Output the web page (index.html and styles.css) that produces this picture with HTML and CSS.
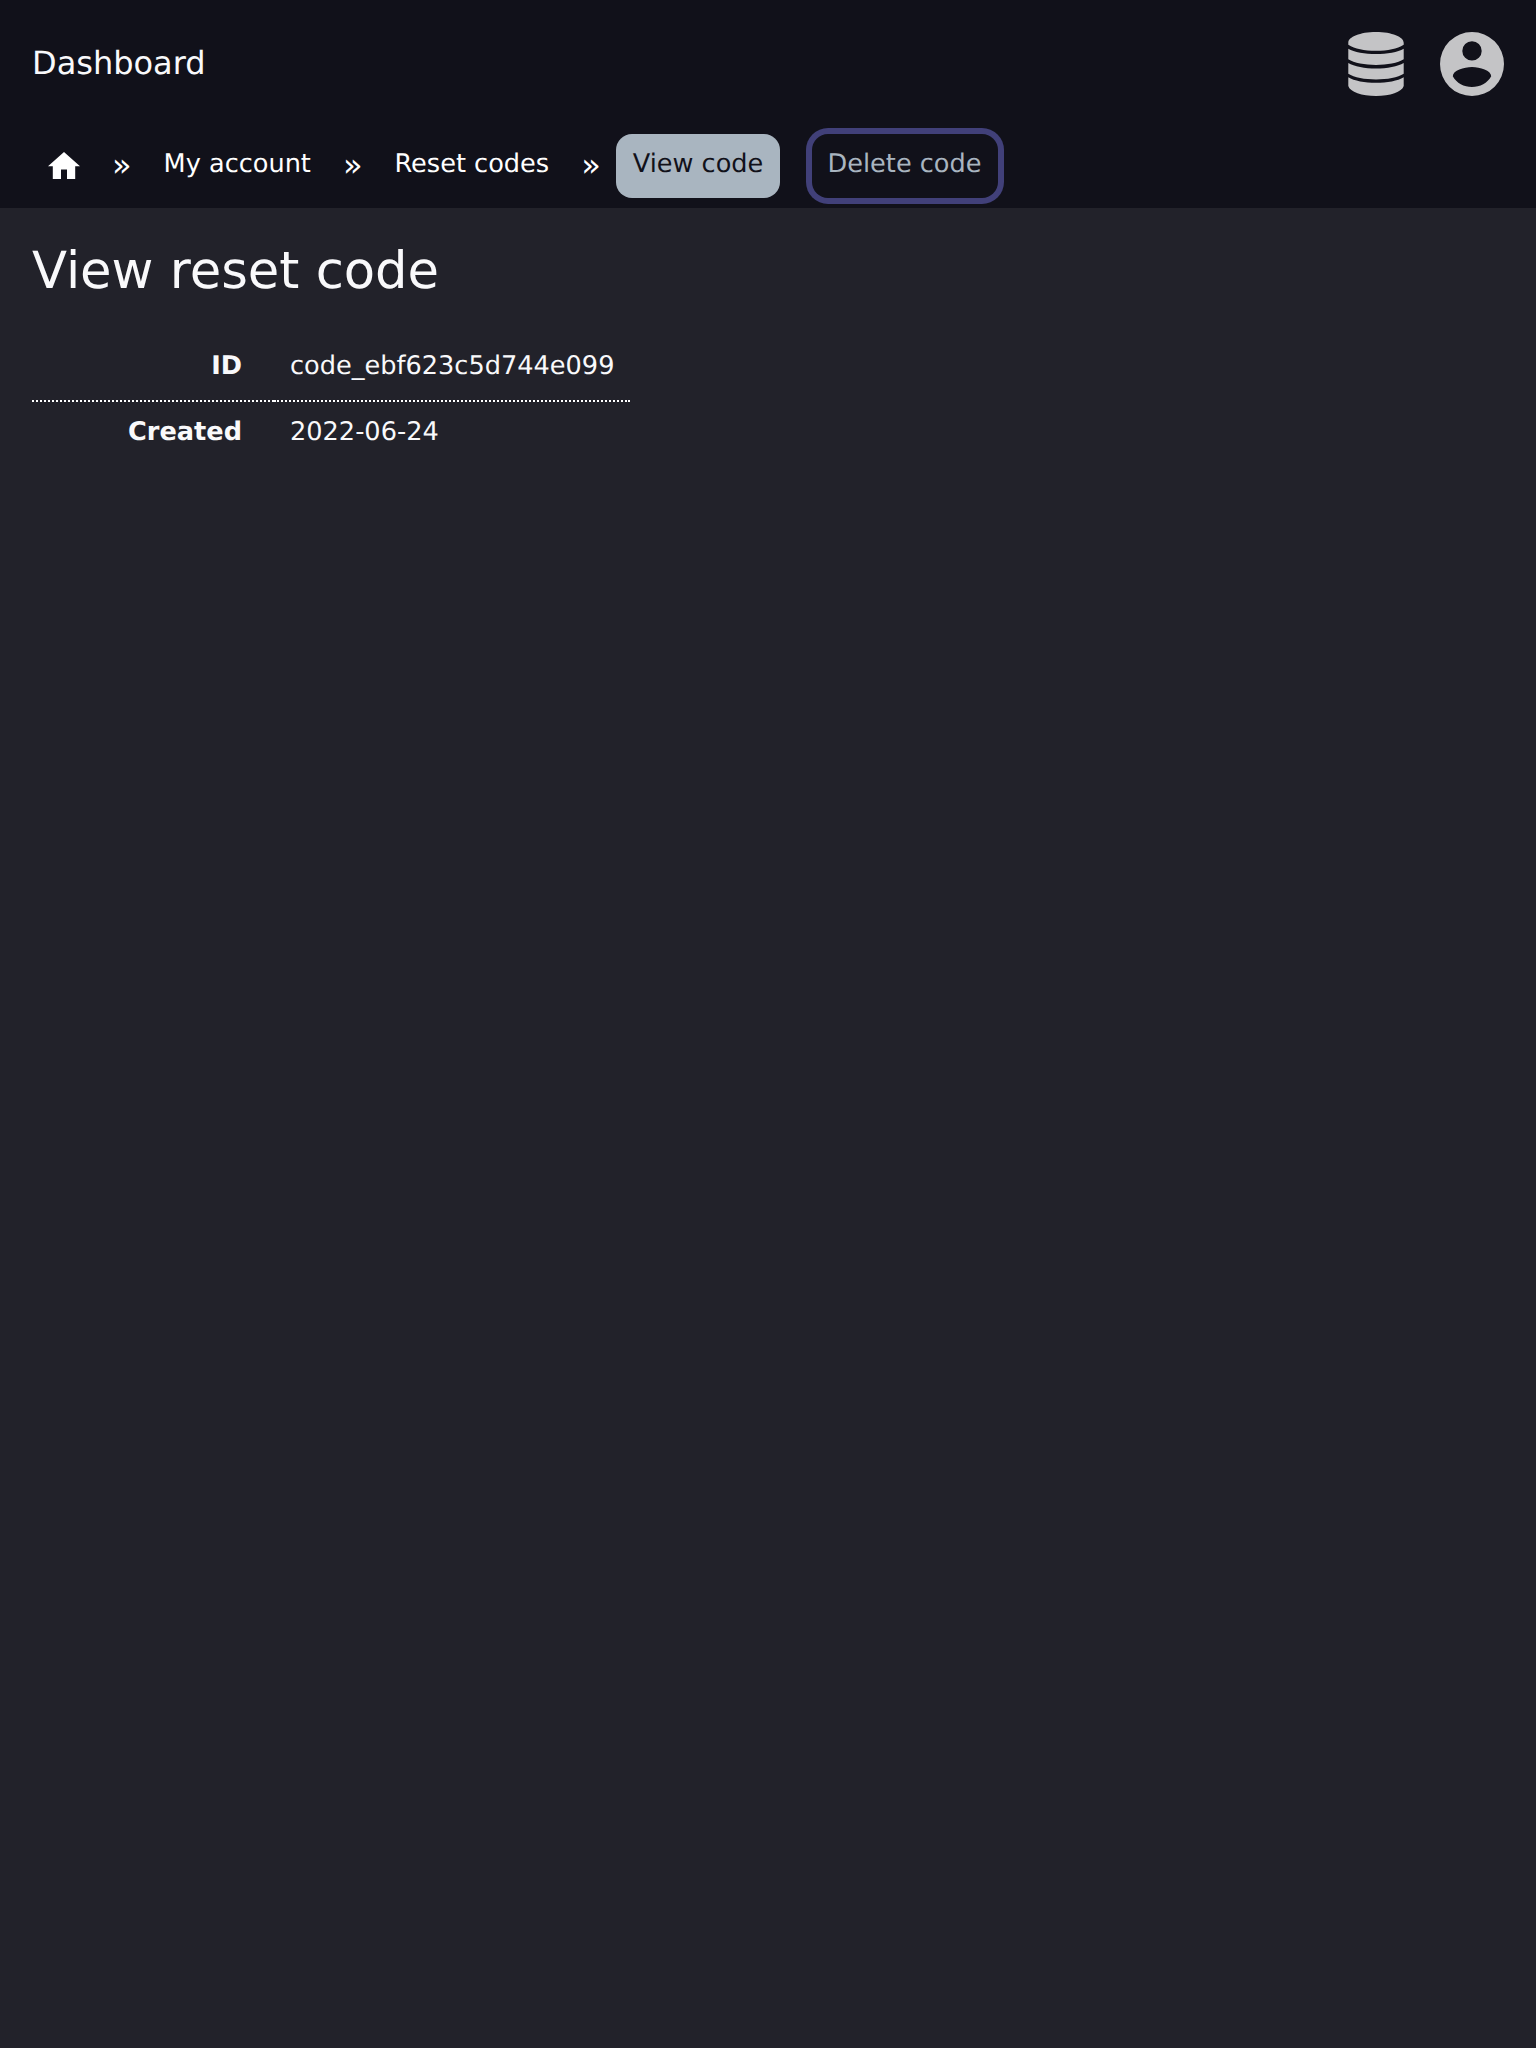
FILE: index.html
```html
<!DOCTYPE html>
<html lang="en">
<head>
<meta charset="utf-8">
<title>View reset code</title>
<link rel="stylesheet" href="styles.css">
</head>
<body>
<header class="site-header">
  <div class="top-bar">
    <a class="brand">Dashboard</a>
    <div class="top-icons">
      <svg class="icon-database" viewBox="0 0 56 64" width="56" height="64"><path d="M.3 10.700C.3 5 12 0 28 0S55.700 5 55.700 10.700V12.700C49 16.800 40 18.700 28 18.700S7 16.800 .3 12.700ZM.3 16.700C6 20 17 22 28 22S50 20 55.700 16.700V27.300C50 31 39 32.900 28 32.900S6 31 .3 27.300ZM.3 31C6 34.500 17 36.600 28 36.600S50 34.500 55.700 31V41.700C50 45.500 39 47.400 28 47.400S6 45.500 .3 41.700ZM.3 45.300C6 49 17 50.800 28 50.800S50 49 55.700 45.300V54C54 60 42 64 28 64S2 60 .3 54Z"/></svg>
      <svg class="icon-user" viewBox="0 0 64 64" width="64" height="64"><path fill-rule="evenodd" d="M32 0A32 32 0 1 1 32 64A32 32 0 1 1 32 0ZM32 9.200A9.700 9.700 0 1 0 32 28.600A9.700 9.700 0 1 0 32 9.200ZM12.800 44.200C16.500 51 24 55 32 55S47.500 51 51.200 44.200C51.200 38.500 40 35 32 35S12.800 38.500 12.800 44.200Z"/></svg>
    </div>
  </div>
  <nav class="crumbs">
    <a class="crumb home"><svg viewBox="0 0 32 27" width="32" height="27"><path d="M16 0L32 14.300H27.200V27H19V17.500H13V27H4.800V14.300H0Z"/></svg></a>
    <span class="sep">»</span>
    <a class="crumb">My account</a>
    <span class="sep">»</span>
    <a class="crumb">Reset codes</a>
    <span class="sep">»</span>
    <a class="crumb active">View code</a>
    <a class="crumb action">Delete code</a>
  </nav>
</header>
<main class="content">
  <h1 class="title">View reset code</h1>
  <table class="details">
    <tr><th>ID</th><td>code_ebf623c5d744e099</td></tr>
    <tr><th>Created</th><td>2022-06-24</td></tr>
  </table>
</main>
</body>
</html>
```
FILE: styles.css
```css
* { box-sizing: border-box; }
body {
  margin: 0;
  min-height: 100vh;
  background: #22222a;
  color: #f9f9fb;
  font-family: "DejaVu Sans", sans-serif;
  font-size: 25.6px;
  text-rendering: geometricPrecision;
}
.site-header { height: 208px; background: #11111a; }
.top-bar {
  display: flex;
  justify-content: space-between;
  align-items: center;
  height: 128px;
  padding: 0 32px;
}
.brand { font-size: 32px; line-height: 38px; padding-bottom: 2px; }
.top-icons { display: flex; gap: 36px; fill: #c4c4c6; }
.top-icons svg { display: block; }
.crumbs { display: flex; padding: 6px 0 0 32px; color: #fff; }
.crumb {
  height: 64px;
  padding: 15px 16px 0;
  line-height: 30px;
  border-radius: 16px;
  white-space: nowrap;
}
.home { padding-top: 18px; fill: #fff; }
.home svg { display: block; }
.sep { margin: 0 16px; padding-top: 15px; font-size: 32px; line-height: 32px; }
.active { margin-left: -0.6px; padding: 15px 16.6px 0; background: #a9b5c0; color: #11111a; }
.action { margin-left: 32px; padding: 15px 16.4px 0 15.6px; color: #a9b5c0; box-shadow: 0 0 0 6px #414079; }
.content { padding: 33px 32px; }
.title { margin: 0; font-size: 51.2px; font-weight: 400; line-height: 60px; }
.details { margin-top: 33px; border-collapse: collapse; line-height: 30px; }
.details th { width: 242px; padding: 17px 32px 19px 0; text-align: right; }
.details td { padding: 17px 16px 19px; }
.details tr + tr > * { border-top: 2px dotted #fff; padding-top: 15px; }
```
